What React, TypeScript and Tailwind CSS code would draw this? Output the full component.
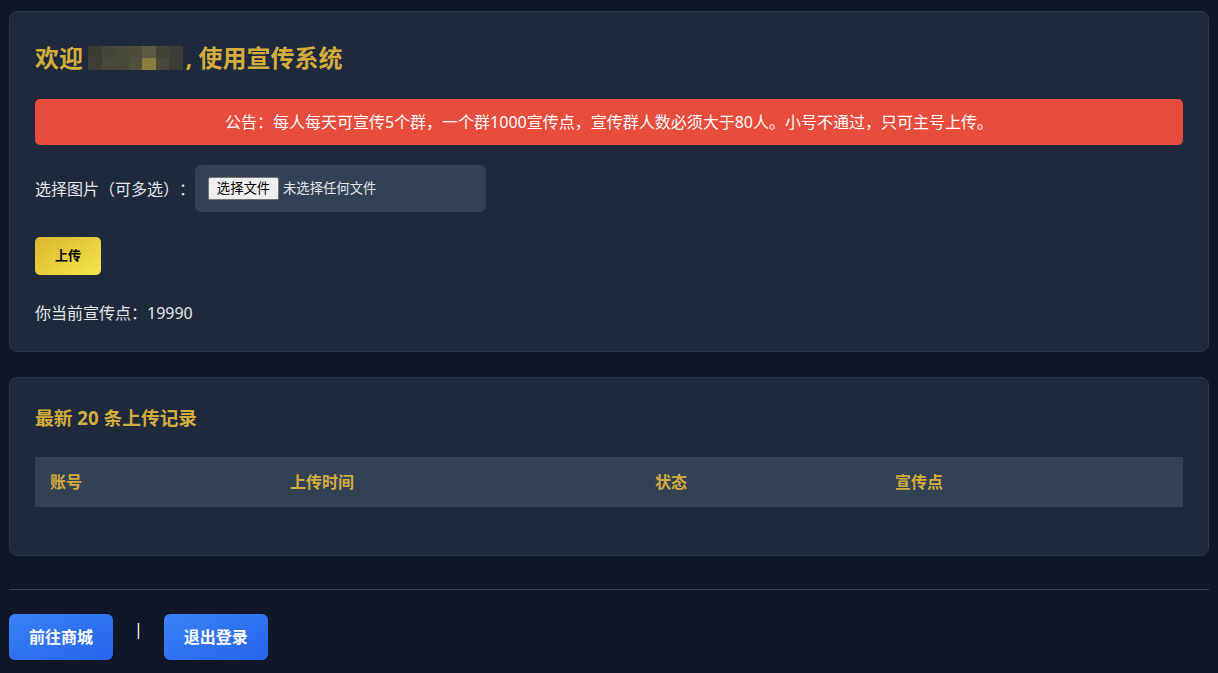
import React from "react";

const font = { fontFamily: '"Noto Sans", "Noto Sans CJK SC", sans-serif' };

function Blur() {
  const cells = [
    ["#3b3d33", "#45463a", "#4a4a3c", "#4f4d3a", "#5b5a40", "#444236", "#3a3c35"],
    ["#3d3f35", "#4a4a3b", "#48483a", "#52503c", "#8a7c3a", "#4a4838", "#393b34"],
  ];
  return (
    <span className="inline-flex flex-col ml-[5px] mr-[3px] align-middle">
      {cells.map((row, i) => (
        <span key={i} className="flex">
          {row.map((c, j) => (
            <span key={j} className="block w-[13.5px] h-[12px]" style={{ background: c }} />
          ))}
        </span>
      ))}
    </span>
  );
}

export default function App() {
  return (
    <div className="min-h-screen bg-[#0f1729] text-[#e5e7eb] px-[9px] pt-[11px] pb-[13px] [text-spacing-trim:space-all]" style={font}>
      <div className="bg-[#1e293b] border border-[#2c374a] rounded-[8px] px-[25px] pt-[30px] pb-[26px]">
        <h2 className="text-[24px] font-bold text-[#d4ad3c] leading-[32px] flex items-center">
          欢迎<Blur />, 使用宣传系统
        </h2>
        <div className="mt-[25px] bg-[#e74c3c] rounded-[5px] h-[46px] flex items-center justify-center text-white text-[16px]">
          公告：每人每天可宣传5个群，一个群1000宣传点，宣传群人数必须大于80人。小号不通过，只可主号上传。
        </div>
        <div className="mt-[20px] flex items-center">
          <span className="text-[16px] text-[#e5e7eb]">选择图片（可多选）：</span>
          <div className="w-[291px] h-[47px] bg-[#334155] rounded-[6px] flex items-center px-[13px]">
            <span className="h-[23px] w-[71px] justify-center bg-[#efefef] border border-[#767676] rounded-[2px] text-black text-[13.33px] flex items-center">选择文件</span>
            <span className="ml-[4px] text-[13.33px] text-[#e5e7eb]">未选择任何文件</span>
          </div>
        </div>
        <button className="mt-[25px] w-[66px] h-[38px] rounded-[5px] bg-gradient-to-br from-[#d9b52f] to-[#f5e84a] text-black text-[13px] font-bold flex items-center justify-center">
          上传
        </button>
        <p className="mt-[26px] text-[16px] leading-[24px]">你当前宣传点：19990</p>
      </div>

      <div className="mt-[25px] bg-[#1e293b] border border-[#2c374a] rounded-[8px] px-[25px] pt-[26px] pb-[48px]">
        <h3 className="text-[18.72px] font-bold text-[#d4ad3c] leading-[28px]">最新 20 条上传记录</h3>
        <div className="mt-[25px] h-[50px] bg-[#334155] flex items-center text-[16px] font-bold text-[#d4ad3c]">
          <div className="w-[240px] pl-[15px]">账号</div>
          <div className="w-[365px] pl-[15px]">上传时间</div>
          <div className="w-[240px] pl-[15px]">状态</div>
          <div className="flex-1 pl-[15px]">宣传点</div>
        </div>
      </div>

      <div className="mt-[33px] border-t border-[#3a4456]" />
      <div className="mt-[24px] flex items-center">
        <button className="w-[104px] h-[46px] rounded-[6px] bg-gradient-to-br from-[#3b82f6] to-[#2563eb] text-white text-[16px] font-bold">前往商城</button>
        <span className="ml-[21px] mr-[21px] text-white text-[16px] -mt-[16px]">|</span>
        <button className="w-[104px] h-[46px] rounded-[6px] bg-gradient-to-br from-[#3b82f6] to-[#2563eb] text-white text-[16px] font-bold">退出登录</button>
      </div>
    </div>
  );
}
